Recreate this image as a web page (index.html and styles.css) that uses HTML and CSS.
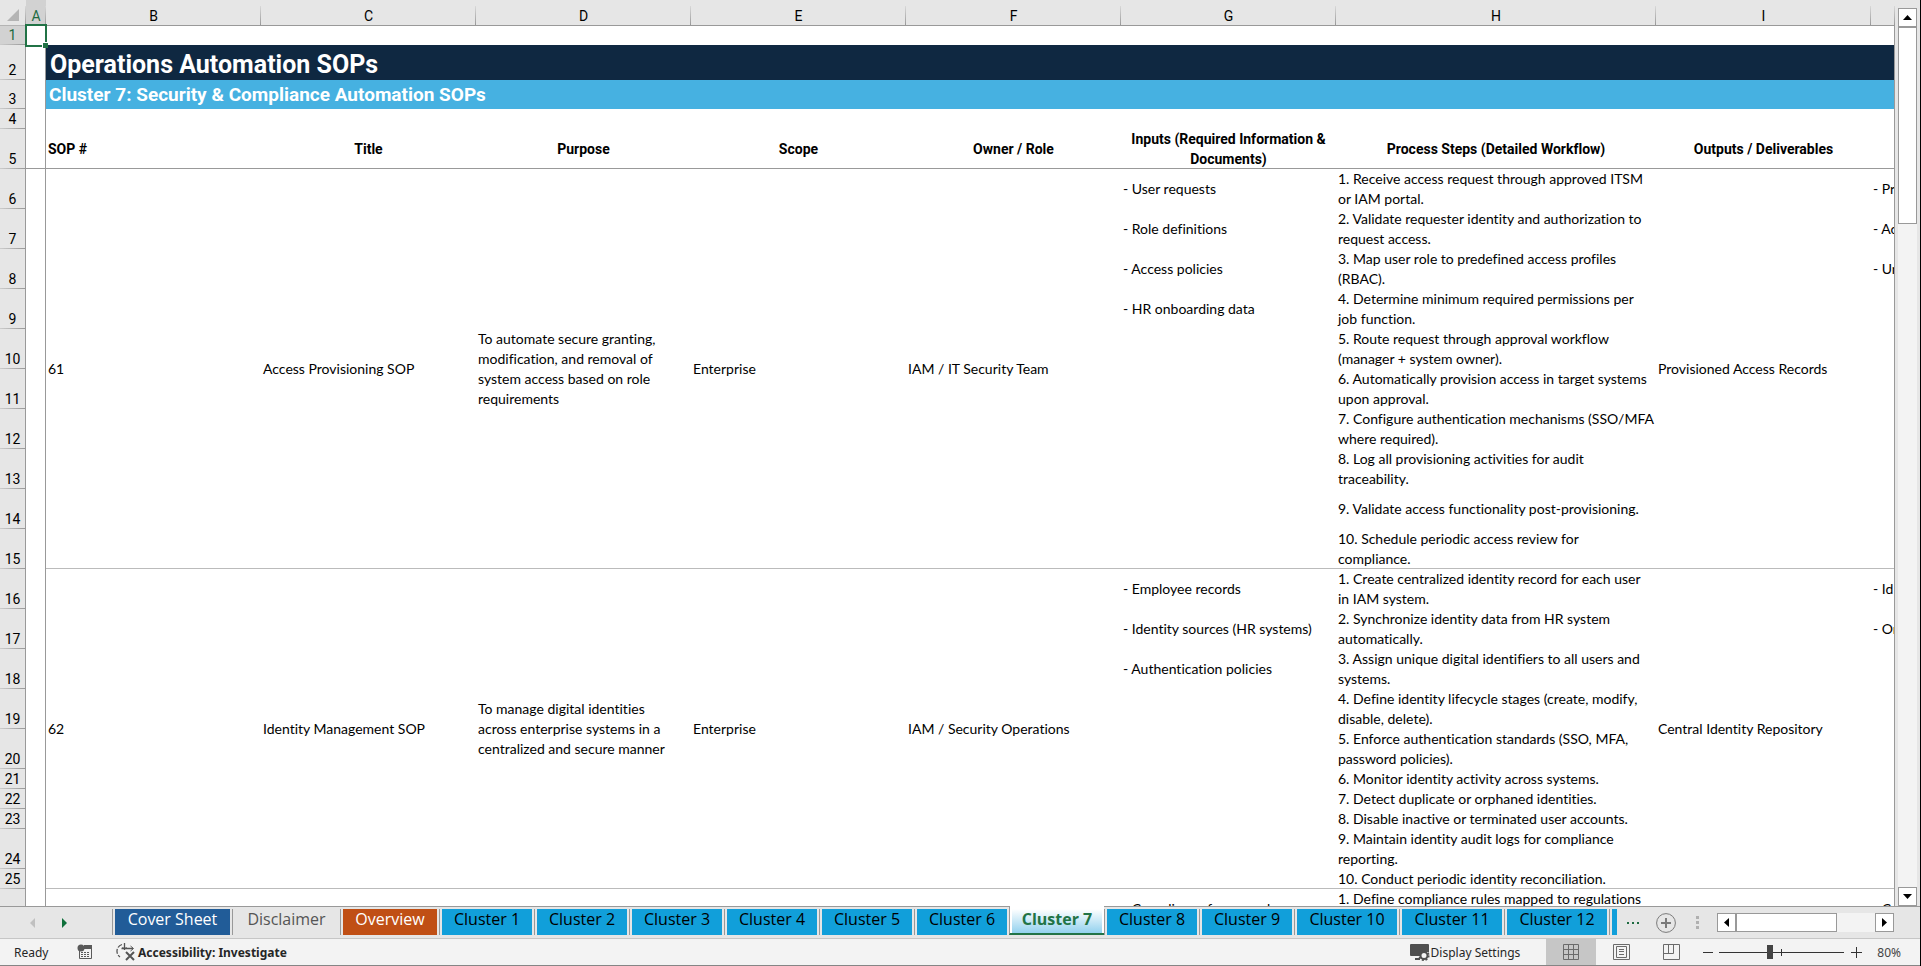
FILE: index.html
```
<!DOCTYPE html>
<html lang="en">
<head>
    <meta charset="UTF-8">
    <meta name="viewport" content="width=device-width, initial-scale=1.0">
    <title>Operations Automation SOPs</title>
    <link rel="stylesheet" href="styles.css">
</head>
<body>
    <main class="workspace">
        <div class="sheet">
            <table>
                <colgroup>
                    <col class="col-num"><col class="col-a">
                    <col class="col"><col class="col"><col class="col"><col class="col"><col class="col"><col class="col">
                    <col class="col-h"><col class="col"><col>
                </colgroup>
                <thead>
                    <tr class="letters">
                        <th class="corner"><svg width="12" height="12"><path d="M12 0V12H0Z" fill="#b4b4b4"/></svg></th>
                        <th class="picked">A</th><th>B</th><th>C</th><th>D</th><th>E</th><th>F</th><th>G</th><th>H</th><th>I</th><th></th>
                    </tr>
                </thead>
                <tbody>
                    <tr class="short"><th class="picked">1</th><td class="a"><div class="cursor"></div></td><td colspan="8"></td><td></td></tr>
                    <tr class="title"><th>2</th><td class="a"></td><td colspan="8">Operations Automation SOPs</td><td></td></tr>
                    <tr class="subtitle"><th>3</th><td class="a"></td><td colspan="8">Cluster 7: Security &amp; Compliance Automation SOPs</td><td></td></tr>
                    <tr class="single"><th>4</th><td class="a"></td><td colspan="8"></td><td></td></tr>
                    <tr class="heads">
                        <th>5</th><td class="a"></td>
                        <td class="first">SOP #</td><td>Title</td><td>Purpose</td><td>Scope</td><td>Owner / Role</td>
                        <td>Inputs (Required Information &amp; Documents)</td><td>Process Steps (Detailed Workflow)</td><td>Outputs / Deliverables</td><td></td>
                    </tr>

                    <!-- SOP 61 -->
                    <tr>
                        <th>6</th><td class="a"></td>
                        <td class="end" rowspan="10">61</td>
                        <td class="end" rowspan="10">Access Provisioning SOP</td>
                        <td class="end" rowspan="10">To automate secure granting,<br>modification, and removal of<br>system access based on role<br>requirements</td>
                        <td class="end" rowspan="10">Enterprise</td>
                        <td class="end" rowspan="10">IAM / IT Security Team</td>
                        <td>- User requests</td>
                        <td>1. Receive access request through approved ITSM<br>or IAM portal.</td>
                        <td class="end" rowspan="10">Provisioned Access Records</td>
                        <td>- Pr</td>
                    </tr>
                    <tr><th>7</th><td class="a"></td><td>- Role definitions</td><td>2. Validate requester identity and authorization to<br>request access.</td><td>- Ac</td></tr>
                    <tr><th>8</th><td class="a"></td><td>- Access policies</td><td>3. Map user role to predefined access profiles<br>(RBAC).</td><td>- Un</td></tr>
                    <tr><th>9</th><td class="a"></td><td>- HR onboarding data</td><td>4. Determine minimum required permissions per<br>job function.</td><td></td></tr>
                    <tr><th>10</th><td class="a"></td><td></td><td>5. Route request through approval workflow<br>(manager + system owner).</td><td></td></tr>
                    <tr><th>11</th><td class="a"></td><td></td><td>6. Automatically provision access in target systems<br>upon approval.</td><td></td></tr>
                    <tr><th>12</th><td class="a"></td><td></td><td>7. Configure authentication mechanisms (SSO/MFA<br>where required).</td><td></td></tr>
                    <tr><th>13</th><td class="a"></td><td></td><td>8. Log all provisioning activities for audit<br>traceability.</td><td></td></tr>
                    <tr><th>14</th><td class="a"></td><td></td><td>9. Validate access functionality post-provisioning.</td><td></td></tr>
                    <tr class="last"><th>15</th><td class="a"></td><td></td><td>10. Schedule periodic access review for<br>compliance.</td><td></td></tr>

                    <!-- SOP 62 -->
                    <tr>
                        <th>16</th><td class="a"></td>
                        <td class="end" rowspan="10">62</td>
                        <td class="end" rowspan="10">Identity Management SOP</td>
                        <td class="end" rowspan="10">To manage digital identities<br>across enterprise systems in a<br>centralized and secure manner</td>
                        <td class="end" rowspan="10">Enterprise</td>
                        <td class="end" rowspan="10">IAM / Security Operations</td>
                        <td>- Employee records</td>
                        <td>1. Create centralized identity record for each user<br>in IAM system.</td>
                        <td class="end" rowspan="10">Central Identity Repository</td>
                        <td>- Id</td>
                    </tr>
                    <tr><th>17</th><td class="a"></td><td>- Identity sources (HR systems)</td><td>2. Synchronize identity data from HR system<br>automatically.</td><td>- Or</td></tr>
                    <tr><th>18</th><td class="a"></td><td>- Authentication policies</td><td>3. Assign unique digital identifiers to all users and<br>systems.</td><td></td></tr>
                    <tr><th>19</th><td class="a"></td><td></td><td>4. Define identity lifecycle stages (create, modify,<br>disable, delete).</td><td></td></tr>
                    <tr><th>20</th><td class="a"></td><td></td><td>5. Enforce authentication standards (SSO, MFA,<br>password policies).</td><td></td></tr>
                    <tr class="single"><th>21</th><td class="a"></td><td></td><td>6. Monitor identity activity across systems.</td><td></td></tr>
                    <tr class="single"><th>22</th><td class="a"></td><td></td><td>7. Detect duplicate or orphaned identities.</td><td></td></tr>
                    <tr class="single"><th>23</th><td class="a"></td><td></td><td>8. Disable inactive or terminated user accounts.</td><td></td></tr>
                    <tr><th>24</th><td class="a"></td><td></td><td>9. Maintain identity audit logs for compliance<br>reporting.</td><td></td></tr>
                    <tr class="single last"><th>25</th><td class="a"></td><td></td><td>10. Conduct periodic identity reconciliation.</td><td></td></tr>

                    <tr><th></th><td class="a"></td><td></td><td></td><td></td><td></td><td></td><td>- Compliance frameworks</td><td>1. Define compliance rules mapped to regulations<br>&nbsp;</td><td></td><td>- Co</td></tr>
                </tbody>
            </table>
        </div>
        <div class="vscroll">
            <button aria-label="Scroll up"><svg width="9" height="5"><path d="M0 5L4.500 0L9 5Z"/></svg></button>
            <div class="vthumb"></div>
            <div class="track"></div>
            <button aria-label="Scroll down"><svg width="9" height="5"><path d="M0 0H9L4.500 5Z"/></svg></button>
        </div>
    </main>

    <nav class="tabbar">
        <div class="arrows">
            <button class="off" aria-label="Previous sheets" disabled><svg width="5" height="10"><path d="M5 0V10L0 5Z"/></svg></button>
            <button aria-label="Next sheets"><svg width="5" height="10"><path d="M0 0V10L5 5Z"/></svg></button>
        </div>
        <div class="tabs">
            <div class="tab"><button class="cover">Cover Sheet</button></div>
            <div class="tab"><button class="plain">Disclaimer</button></div>
            <div class="tab"><button class="overview">Overview</button></div>
            <div class="tab"><button>Cluster 1</button></div>
            <div class="tab"><button>Cluster 2</button></div>
            <div class="tab"><button>Cluster 3</button></div>
            <div class="tab"><button>Cluster 4</button></div>
            <div class="tab"><button>Cluster 5</button></div>
            <div class="tab"><button>Cluster 6</button></div>
            <div class="tab active"><button>Cluster 7</button></div>
            <div class="tab"><button>Cluster 8</button></div>
            <div class="tab"><button>Cluster 9</button></div>
            <div class="tab wide"><button>Cluster 10</button></div>
            <div class="tab wide"><button>Cluster 11</button></div>
            <div class="tab wide"><button>Cluster 12</button></div>
            <div class="tab"><button aria-label="Next sheet"></button></div>
        </div>
        <button class="more" aria-label="More sheets"><svg width="14" height="4" fill="#1e6b41"><rect y="1" width="2" height="2"/><rect x="5" y="1" width="2" height="2"/><rect x="10" y="1" width="2" height="2"/></svg></button>
        <button class="add" aria-label="New sheet"><svg width="20" height="20" fill="none" stroke="#7a7a7a"><circle cx="10" cy="10" r="9.400"/><path d="M10 5V15M5 10H15" stroke-width="2"/></svg></button>
        <svg class="grip" width="3" height="13" fill="#b0b0b0"><rect width="3" height="3"/><rect y="5" width="3" height="3"/><rect y="10" width="3" height="3"/></svg>
        <div class="hscroll">
            <button aria-label="Scroll left"><svg width="5" height="9"><path d="M5 0V9L0 4.500Z"/></svg></button>
            <div class="hthumb"></div>
            <div class="track"></div>
            <button aria-label="Scroll right"><svg width="5" height="9"><path d="M0 0V9L5 4.500Z"/></svg></button>
        </div>
    </nav>

    <footer class="status">
        <span class="ready">Ready</span>
        <button class="macro" aria-label="Record macro">
            <svg width="16" height="16" fill="none" stroke="#5a5a5a"><path d="M2.500 7V14.500H14.500V1.500H7"/><path d="M7 3H15" stroke-width="4"/><circle cx="4" cy="4" r="3.500" fill="#5a5a5a" stroke="none"/><path d="M4 8.500H13M4 10.500H13M4 12.500H13" stroke-dasharray="2 1"/></svg>
        </button>
        <button class="access">
            <svg width="20" height="18" fill="none" stroke="#555"><path d="M6 1.500A7 7 0 0 0 4 14" stroke-width="1.300" stroke-dasharray="5 1.500"/><path d="M8.500 0V7M5.500 5.500H17" stroke-width="1.300"/><path d="M6.500 4L8.500 6.500L10.500 4M14.500 3L17.500 5.500L14.500 8" /><path d="M10 9L18 17M18 9L10 17" stroke-width="2"/></svg>
            Accessibility: Investigate
        </button>
        <button class="display">
            <svg width="20" height="18"><path d="M1 1H18Q19 1 19 2V9H14L10 13H1Q0 13 0 12V2Q0 1 1 1ZM5 15H10V17H5Z" fill="#4f4f4f"/><circle cx="14" cy="12.500" r="3.500" fill="#f3f3f3" stroke="#4f4f4f" stroke-width="2"/><circle cx="14" cy="12.500" r="4.800" fill="none" stroke="#4f4f4f" stroke-width="1.600" stroke-dasharray="2 1.770"/></svg>
            Display Settings
        </button>
        <button class="view on" aria-label="Normal view"><svg width="16" height="16" fill="none" stroke="#6a6a6a"><path d="M.5 .5H15.500V15.500H.5ZM5.500 0V16M10.500 0V16M0 5.500H16M0 10.500H16"/></svg></button>
        <button class="view" aria-label="Page layout"><svg width="17" height="16" fill="none" stroke="#6a6a6a"><path d="M.5 .5H16.500V15.500H.5ZM3.500 2.500H13.500V13.500H3.500ZM6 5.500H11M6 7.500H11M6 10.500H11"/></svg></button>
        <button class="view" aria-label="Page break preview"><svg width="17" height="16" fill="none" stroke="#6a6a6a"><path d="M.5 .5H16.500V15.500H.5ZM.5 9.500H10.500V.5M5.500 .5V9.500"/></svg></button>
        <button class="zoom-btn" aria-label="Zoom out"><svg width="10" height="11" stroke="#333"><path d="M0 5.500H10"/></svg></button>
        <input class="zoom" type="range" min="0" max="100" value="40" aria-label="Zoom">
        <button class="zoom-btn" aria-label="Zoom in"><svg width="11" height="11" stroke="#333"><path d="M0 5.500H11M5.500 0V11"/></svg></button>
        <span class="percent">80%</span>
    </footer>
</body>
</html>
```
FILE: styles.css
```
* {
    box-sizing: border-box;
}
body {
    margin: 0;
    height: 100vh;
    display: flex;
    flex-direction: column;
    overflow: hidden;
    background: #e6e6e6;
    border-right: 1px solid #000;
    font-family: "Open Sans", sans-serif;
    color: #000;
}
button {
    padding: 0;
    border: none;
    background: none;
    font: inherit;
    color: inherit;
    display: flex;
    align-items: center;
    justify-content: center;
    flex: none;
}

/* Worksheet */
.workspace {
    flex: 1;
    min-height: 0;
    display: flex;
}
.sheet {
    flex: 1;
    min-width: 0;
    overflow: hidden;
}
table {
    width: 100%;
    table-layout: fixed;
    border-collapse: separate;
    border-spacing: 0;
    font-family: Lato, sans-serif;
    font-size: 14px;
    line-height: 20px;
    font-variant-ligatures: none;
}
.col-num {
    width: 26px;
}
.col-a {
    width: 20px;
}
.col {
    width: 215px;
}
.col-h {
    width: 320px;
}
tr {
    height: 40px;
}
th {
    padding: 0;
    font-family: Roboto, sans-serif;
    font-weight: normal;
}
td {
    padding: 0 0 0 2px;
    background: #fff;
    white-space: nowrap;
    overflow: hidden;
}
.letters {
    height: 26px;
}
.letters th {
    padding-top: 7px;
    line-height: 18px;
    border-bottom: 1px solid #999;
    background: linear-gradient(#d8d8d8, #999) right bottom / 1px 19px no-repeat;
}
.letters .corner {
    padding: 4px 0 0 7px;
    line-height: 12px;
    border-bottom-color: #b4b4b4;
}
.corner svg {
    display: block;
}
tbody th {
    padding-bottom: 1px;
    vertical-align: bottom;
    line-height: 18px;
    border-right: 1px solid #999;
    background: linear-gradient(90deg, #ccc, #999) left bottom / 100% 1px no-repeat;
}
.picked,
.letters .picked {
    color: #1e6b41;
    background-color: #d2d2d2;
}
td.a,
td:last-child {
    border-right: 1px solid #999;
}
tr.short {
    height: 19px;
}
tr.single {
    height: 20px;
}
.short td.a {
    position: relative;
    overflow: visible;
}
.cursor {
    position: absolute;
    z-index: 1;
    top: -2px;
    left: -1px;
    width: 22px;
    height: 23px;
    border: 2px solid #217346;
}
.cursor::after {
    content: "";
    position: absolute;
    right: -3px;
    bottom: -3px;
    width: 5px;
    height: 5px;
    background: #217346;
    border-top: 1px solid #fff;
    border-left: 1px solid #fff;
}
.title {
    height: 35px;
}
.title td:not(.a) {
    padding: 4px 0 0 4px;
    background: #0f2841;
    color: #fff;
    font: bold 25px/30px Roboto, sans-serif;
}
.subtitle {
    height: 29px;
}
.subtitle td:not(.a) {
    padding: 0 0 0 3px;
    background: #46b1e1;
    color: #fff;
    font: bold 19px/28px Roboto, sans-serif;
}
.heads td {
    padding: 0;
    font-family: Roboto, sans-serif;
    font-weight: bold;
    text-align: center;
    white-space: normal;
    box-shadow: inset 0 -1px #999;
}
.heads .first {
    padding-left: 2px;
    text-align: left;
}
td.end,
.last td:not(.a) {
    box-shadow: inset 0 -1px #bbb;
}

/* Scroll bars */
.vscroll {
    display: flex;
    flex-direction: column;
    flex: none;
    width: 19px;
    margin: 8px 3px 0;
}
.vscroll button,
.hscroll button {
    width: 19px;
    height: 19px;
    background: #fff;
    border: 1px solid #999;
}
.vthumb {
    height: 197px;
    background: #fff;
    border: 1px solid #999;
}
.track {
    flex: 1;
    background: #f3f3f3;
}
.hscroll {
    display: flex;
    width: 177px;
    margin: 0 26px 0 18px;
}
.hthumb {
    width: 101px;
    background: #fff;
    border: 1px solid #999;
}

/* Sheet tabs */
.tabbar {
    flex: none;
    height: 33px;
    display: flex;
    align-items: center;
    border-top: 1px solid #999;
    border-bottom: 1px solid #c6c6c6;
    font-size: 16px;
}
.arrows {
    flex: none;
    width: 112px;
    padding-left: 30px;
    display: flex;
    gap: 27px;
    fill: #0f703b;
}
.arrows .off {
    fill: #c0c0c0;
}
.tabs {
    flex: 1;
    min-width: 0;
    height: 32px;
    margin-top: -1px;
    display: flex;
    align-items: flex-start;
    overflow: hidden;
}
.tab {
    flex: none;
    margin-top: 3px;
    padding: 0 2px;
    border-left: 1px solid #999;
}
.tab button {
    width: 90px;
    height: 26px;
    padding-bottom: 6px;
    background: #119fda;
}
.tab.wide button {
    width: 100px;
}
.tab .cover {
    width: 115px;
    background: #215c98;
    color: #fff;
}
.tab .plain {
    width: 103px;
    background: none;
    color: #555;
}
.tab .overview {
    width: 94px;
    background: #c04f15;
    color: #fff;
}
.tab.active {
    margin-top: 0;
    padding-top: 3px;
    background: #fff;
    border-bottom: 2px solid #217346;
}
.tab.active button {
    height: 24px;
    padding-bottom: 4px;
    background: linear-gradient(#fff, #92d1ee);
    color: #217346;
    font-weight: bold;
}
.more {
    margin-left: 10px;
}
.add {
    margin-left: 15px;
}
.grip {
    flex: none;
    margin-left: 20px;
}

/* Status bar */
.status {
    flex: none;
    height: 27px;
    display: flex;
    align-items: center;
    background: #f3f3f3;
    border-bottom: 1px solid #858585;
    font: 12px "Noto Sans", sans-serif;
    color: #262626;
}
.ready {
    width: 63px;
    margin-left: 14px;
}
.access {
    margin-left: 23px;
    gap: 2px;
    font-weight: bold;
}
.display {
    margin-left: auto;
    margin-right: 26px;
    gap: 1px;
}
.view {
    width: 50px;
    height: 26px;
}
.view.on {
    background: #c6c6c6;
}
.zoom-btn {
    margin-left: 7px;
}
.zoom {
    appearance: none;
    width: 125px;
    height: 14px;
    margin: 0 0 0 6px;
    background:
        linear-gradient(#333, #333) center / 100% 1px no-repeat,
        linear-gradient(#333, #333) center / 1px 7px no-repeat;
}
.zoom::-webkit-slider-thumb {
    appearance: none;
    width: 6px;
    height: 14px;
    background: #444;
}
.percent {
    margin: 0 19px 0 15px;
    color: #444;
}
```
